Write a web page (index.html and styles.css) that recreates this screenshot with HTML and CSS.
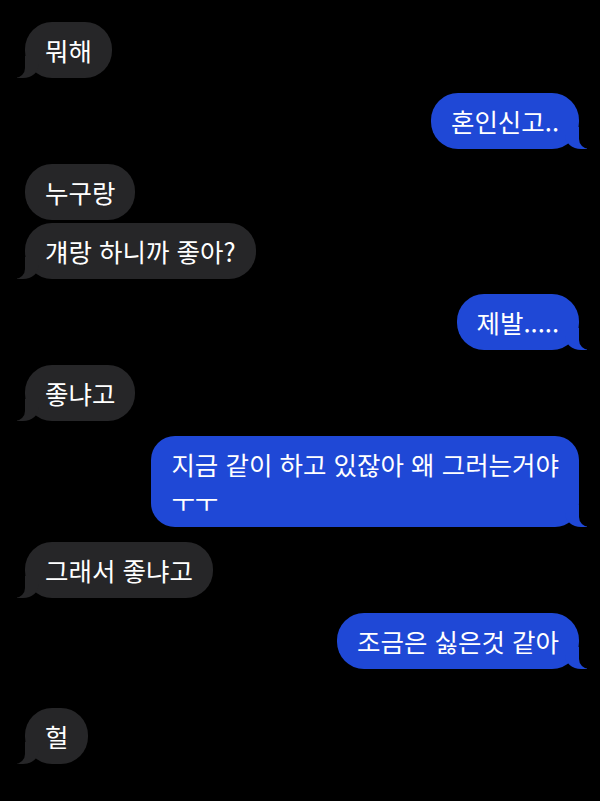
FILE: index.html
```html
<!DOCTYPE html>
<html lang="ko">
<head>
	<meta charset="UTF-8">
	<meta name="viewport" content="width=device-width, initial-scale=1.0">
	<title>메시지</title>
	<link rel="stylesheet" href="styles.css">
</head>
<body>
	<div class="chat">
		<div class="msg them tail">뭐해</div>
		<div class="msg me tail">혼인신고..</div>
		<div class="msg them">누구랑</div>
		<div class="msg them tail next">걔랑 하니까 좋아?</div>
		<div class="msg me tail">제발.....</div>
		<div class="msg them tail">좋냐고</div>
		<div class="msg me tail multi">지금 같이 하고 있잖아 왜 그러는거야<br>ㅜㅜ</div>
		<div class="msg them tail">그래서 좋냐고</div>
		<div class="msg me tail">조금은 싫은것 같아</div>
		<div class="msg them tail far">헐</div>
	</div>
</body>
</html>
```

FILE: styles.css
```css
html, body {
	background: #000;
}

body {
	margin: 0;
	padding: 22px 21px 0 25px;
	font-family: "Noto Sans CJK KR", "Noto Sans", sans-serif;
	color: #fff;
}

.chat {
	display: flex;
	flex-direction: column;
	gap: 15px;
}

.msg {
	position: relative;
	padding: 12px 20px;
	font-size: 25.5px;
	line-height: 32px;
	border-radius: 27px;
	max-width: 460px;
}

.msg.multi {
	padding: 9px 20px 8px;
	line-height: 37px;
	border-radius: 24px;
}

.msg.next {
	margin-top: -12px;
}

.msg.far {
	margin-top: 24px;
}

.them {
	align-self: flex-start;
	background: #262628;
}

.me {
	align-self: flex-end;
	background: #1f48d6;
}

/* хвостик */
.tail::before,
.tail::after {
	content: "";
	position: absolute;
	bottom: 0;
	height: 22px;
}

.them.tail::before {
	left: -8px;
	width: 22px;
	background: #262628;
	border-bottom-right-radius: 16px 14px;
}

.them.tail::after {
	left: -26px;
	width: 26px;
	background: #000;
	border-bottom-right-radius: 10px;
}

.me.tail::before {
	right: -8px;
	width: 22px;
	background: #1f48d6;
	border-bottom-left-radius: 16px 14px;
}

.me.tail::after {
	right: -26px;
	width: 26px;
	background: #000;
	border-bottom-left-radius: 10px;
}
```
